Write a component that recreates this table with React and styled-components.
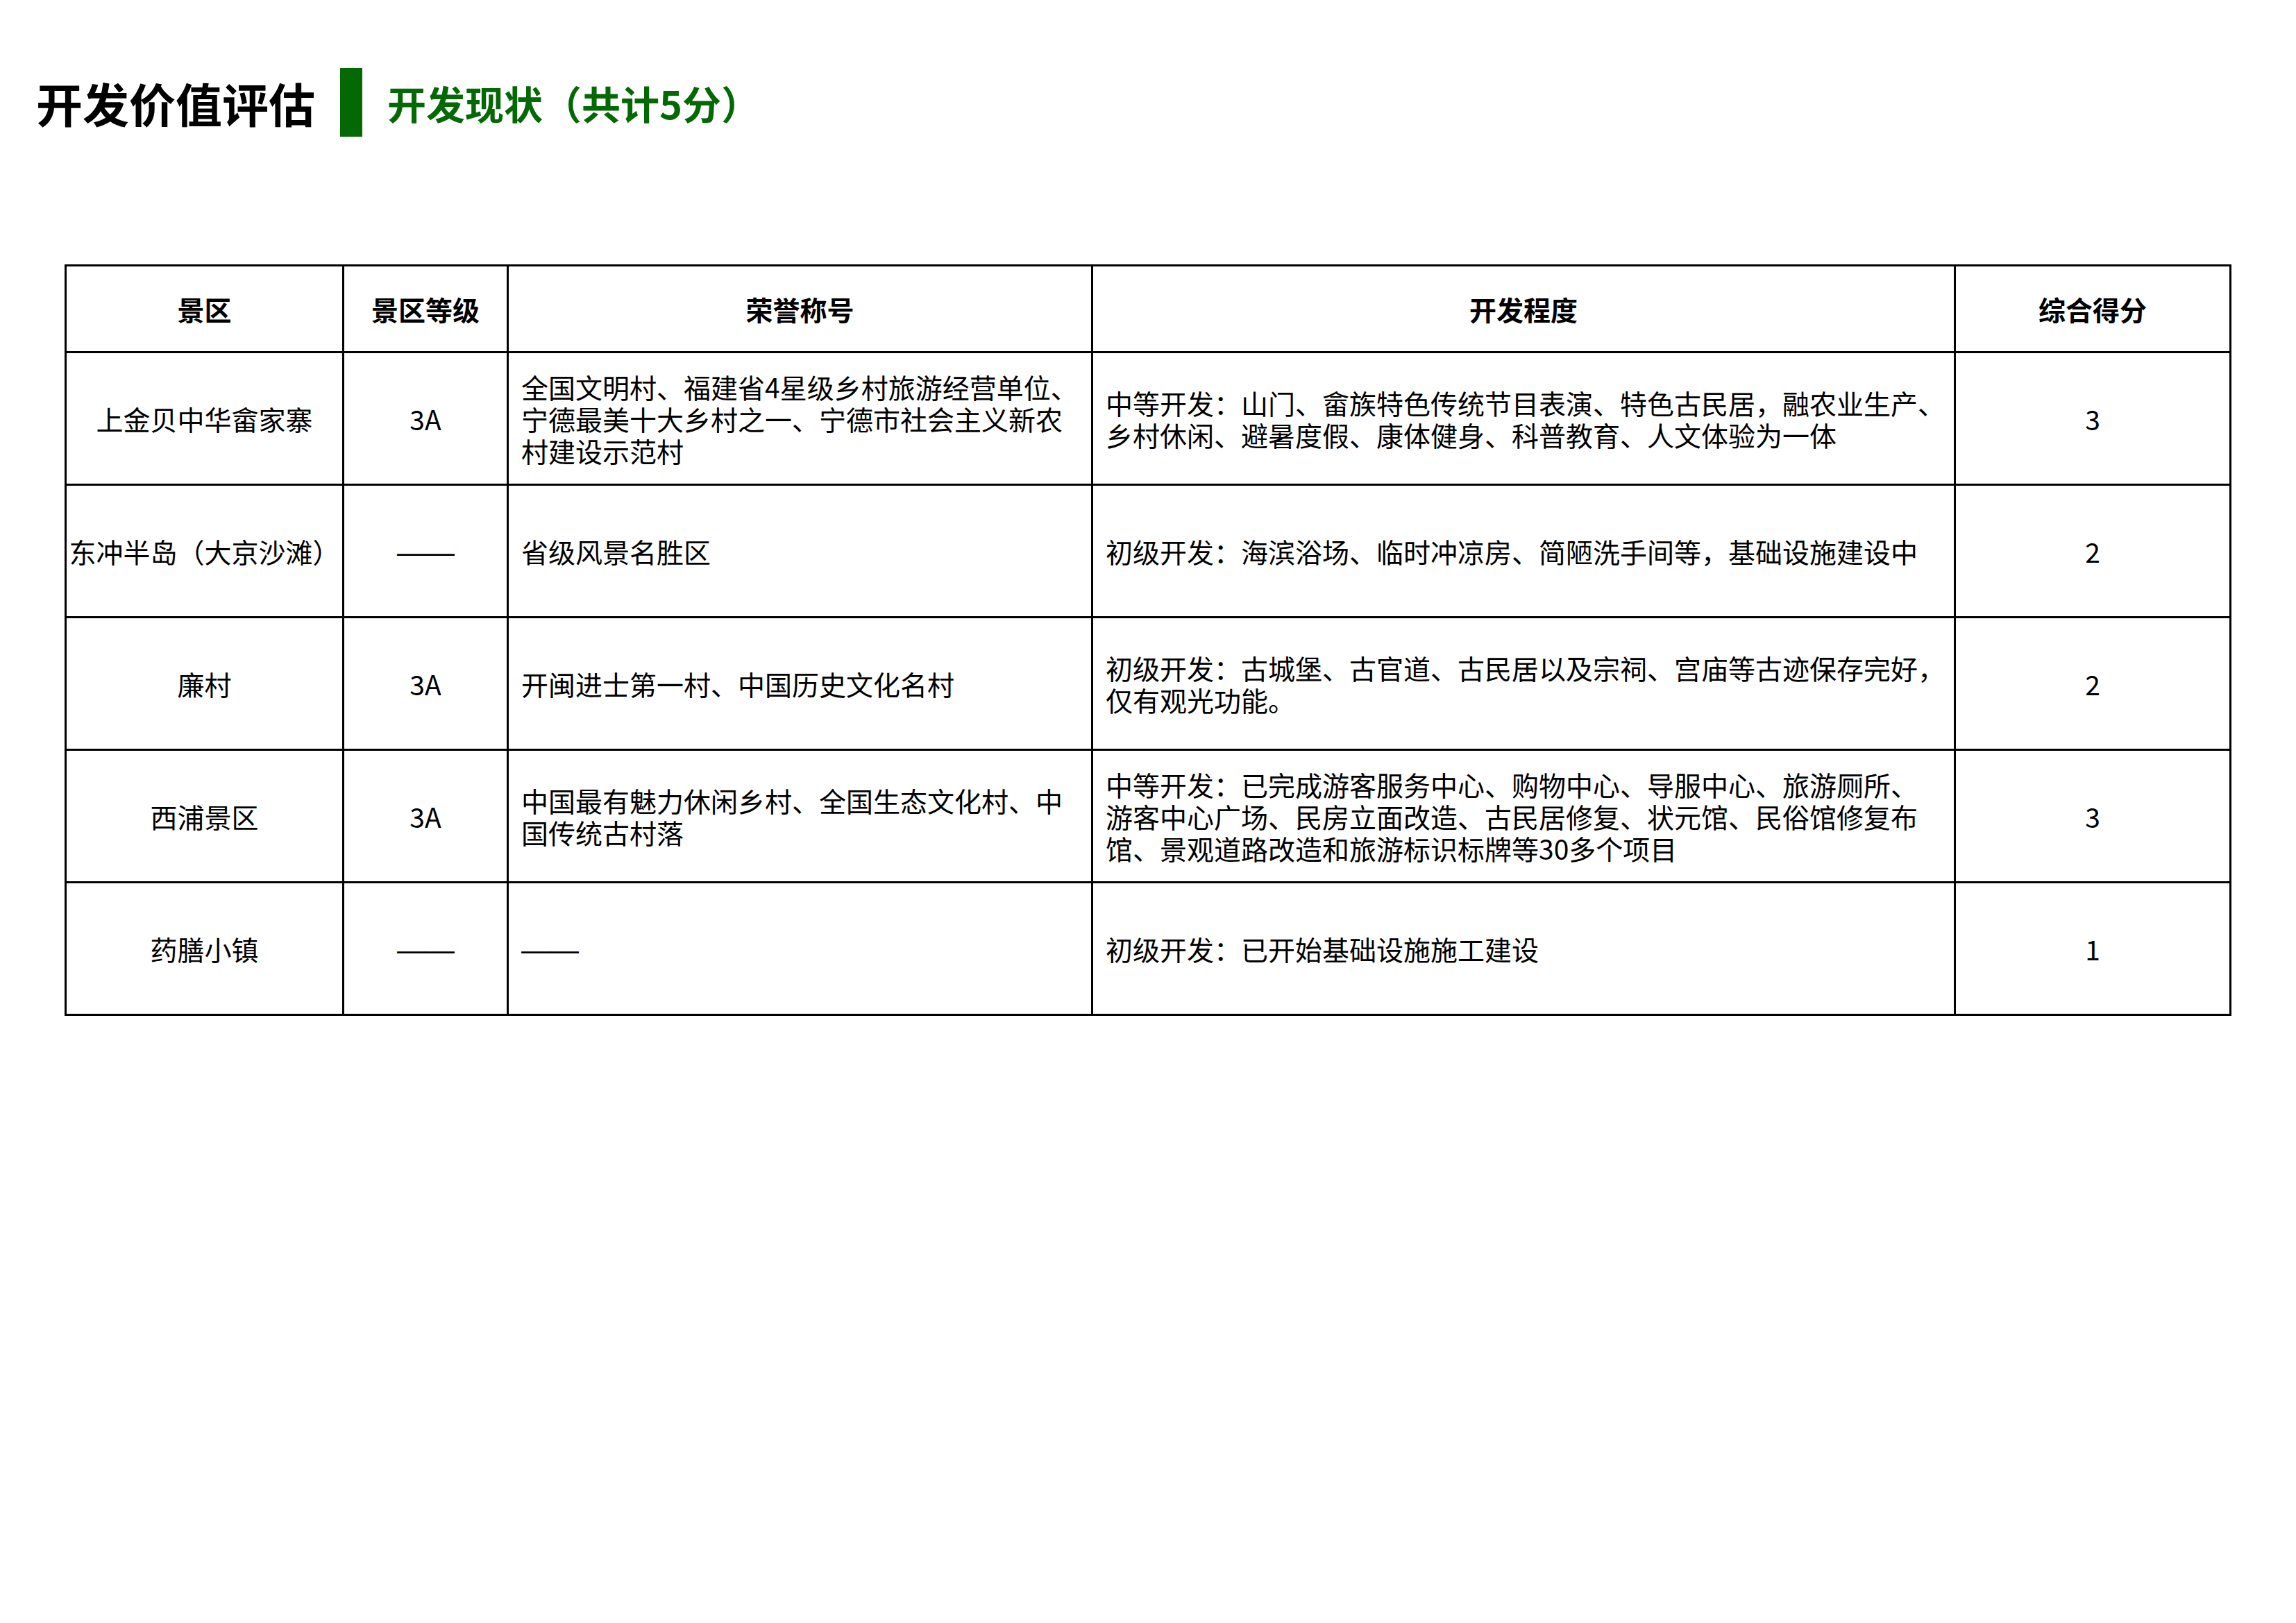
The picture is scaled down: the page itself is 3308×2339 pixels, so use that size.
import React from "react";
import styled, { createGlobalStyle } from "styled-components";

const FONT = `"Noto Sans CJK SC", "Noto Sans", sans-serif`;
const GREEN = "#046804";
const DASH = "——";

const rows = [
  {
    name: "上金贝中华畲家寨",
    level: "3A",
    honor: [
      "全国文明村、福建省4星级乡村旅游经营单位、",
      "宁德最美十大乡村之一、宁德市社会主义新农",
      "村建设示范村"
    ],
    dev: [
      "中等开发：山门、畲族特色传统节目表演、特色古民居，融农业生产、",
      "乡村休闲、避暑度假、康体健身、科普教育、人文体验为一体"
    ],
    score: 3
  },
  {
    name: "东冲半岛（大京沙滩）",
    level: DASH,
    honor: ["省级风景名胜区"],
    dev: ["初级开发：海滨浴场、临时冲凉房、简陋洗手间等，基础设施建设中"],
    score: 2
  },
  {
    name: "廉村",
    level: "3A",
    honor: ["开闽进士第一村、中国历史文化名村"],
    dev: [
      "初级开发：古城堡、古官道、古民居以及宗祠、宫庙等古迹保存完好，",
      "仅有观光功能。"
    ],
    score: 2
  },
  {
    name: "西浦景区",
    level: "3A",
    honor: ["中国最有魅力休闲乡村、全国生态文化村、中", "国传统古村落"],
    dev: [
      "中等开发：已完成游客服务中心、购物中心、导服中心、旅游厕所、",
      "游客中心广场、民房立面改造、古民居修复、状元馆、民俗馆修复布",
      "馆、景观道路改造和旅游标识标牌等30多个项目"
    ],
    score: 3
  },
  {
    name: "药膳小镇",
    level: DASH,
    honor: [DASH],
    dev: ["初级开发：已开始基础设施施工建设"],
    score: 1
  }
];

const columns = [
  { label: "景区", width: 397 },
  { label: "景区等级", width: 234 },
  { label: "荣誉称号", width: 839 },
  { label: "开发程度", width: 1240 },
  { label: "综合得分", width: 394 }
];

// the long dash is one unbroken rule in the source, the CJK font splits it
const Text = ({ children }) =>
  children === DASH ? <Dash>{children}</Dash> : children;

const Lines = ({ lines }) =>
  lines.map((line, i) => (
    <Line key={i}>
      <Text>{line}</Text>
    </Line>
  ));

export default function App() {
  return (
    <Page>
      <GlobalStyle />
      <TitleBar>
        <Title>开发价值评估</Title>
        <Marker />
        <Subtitle>开发现状（共计5分）</Subtitle>
      </TitleBar>
      <Table>
        <colgroup>
          {columns.map(col => (
            <col key={col.label} style={{ width: col.width }} />
          ))}
        </colgroup>
        <thead>
          <HeadRow>
            {columns.map(col => (
              <HeadCell key={col.label}>{col.label}</HeadCell>
            ))}
          </HeadRow>
        </thead>
        <tbody>
          {rows.map(row => (
            <BodyRow key={row.name}>
              <Cell $center>{row.name}</Cell>
              <Cell $center>
                <Text>{row.level}</Text>
              </Cell>
              <Cell>
                <Lines lines={row.honor} />
              </Cell>
              <Cell>
                <Lines lines={row.dev} />
              </Cell>
              <Cell $center>{row.score}</Cell>
            </BodyRow>
          ))}
        </tbody>
      </Table>
    </Page>
  );
}

const GlobalStyle = createGlobalStyle`
  html, body {
    margin: 0;
    padding: 0;
    background: #fff;
  }
  body {
    font-family: ${FONT};
    color: #000;
  }
`;

const Page = styled.div`
  width: 3308px;
  height: 2339px;
  overflow: hidden;
  background: #fff;
  box-sizing: border-box;
  padding-top: 98px;
`;

const TitleBar = styled.header`
  display: flex;
  align-items: center;
  gap: 36px;
  padding-left: 52px;
  height: 99px;
`;

const Title = styled.h1`
  margin: 0;
  font-size: 67px;
  font-weight: 700;
  line-height: 1;
  color: #000;
`;

const Marker = styled.span`
  display: block;
  width: 32px;
  height: 99px;
  background: ${GREEN};
`;

const Subtitle = styled.h2`
  margin: 0;
  font-size: 56px;
  font-weight: 700;
  line-height: 1;
  color: ${GREEN};
`;

const Table = styled.table`
  margin: 184px 0 0 93px;
  width: 3122px;
  table-layout: fixed;
  border-collapse: separate;
  border-spacing: 3px;
  background: #000;
  font-size: 39px;
  line-height: 46px;
`;

const HeadRow = styled.tr`
  height: 122px;
`;

const BodyRow = styled.tr`
  height: 188px;
`;

const HeadCell = styled.th`
  background: #fff;
  padding: 0;
  font-weight: 700;
  text-align: center;
  vertical-align: middle;
`;

const Cell = styled.td`
  background: #fff;
  padding: ${({ $center }) => ($center ? "0" : "0 6px 0 18px")};
  text-align: ${({ $center }) => ($center ? "center" : "left")};
  vertical-align: middle;
  white-space: nowrap;
  overflow: hidden;
`;

const Line = styled.span`
  display: block;
  white-space: nowrap;
`;

const Dash = styled.span`
  font-family: "Liberation Sans", sans-serif;
  font-size: 42px;
  letter-spacing: -1px;
`;
